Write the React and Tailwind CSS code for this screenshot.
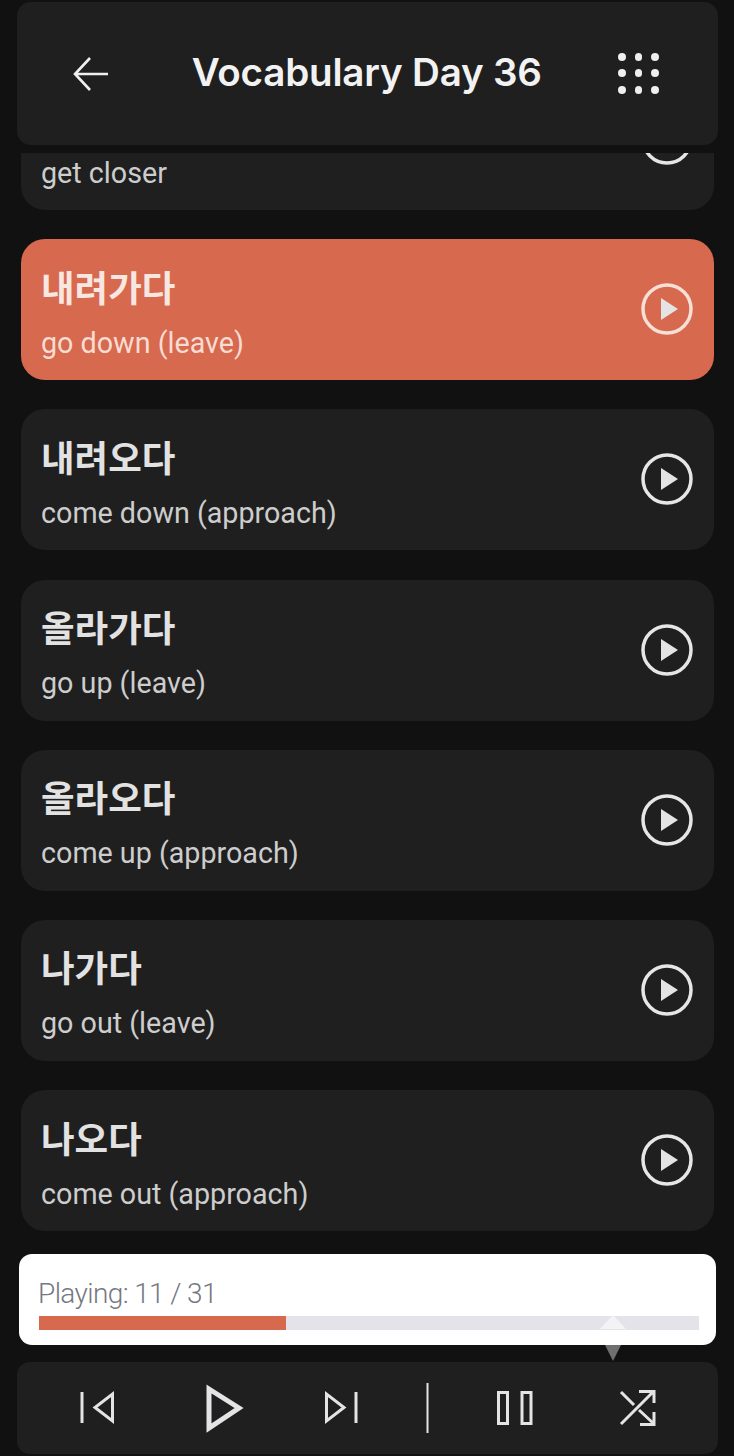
import React from "react";

const words = [
  { ko: "다가가다", en: "get closer" },
  { ko: "내려가다", en: "go down (leave)", active: true },
  { ko: "내려오다", en: "come down (approach)" },
  { ko: "올라가다", en: "go up (leave)" },
  { ko: "올라오다", en: "come up (approach)" },
  { ko: "나가다", en: "go out (leave)" },
  { ko: "나오다", en: "come out (approach)" },
];

const PlayCircle = ({ active }) => (
  <svg width="54" height="54" viewBox="0 0 54 54" fill="none" className="shrink-0 -mt-[1px]">
    <circle cx="27" cy="27" r="24" stroke={active ? "#f6dfd7" : "#e6e6e6"} strokeWidth="3.5" />
    <path d="M21 16 L38 27 L21 38 Z" fill="#e4e4e4" />
  </svg>
);

const WordCard = ({ ko, en, active }) => (
  <div
    className={`h-[141px] shrink-0 rounded-[24px] flex items-center justify-between pl-5 pr-5 ${
      active ? "bg-[#d6694e]" : "bg-[#1f1f1f]"
    }`}
  >
    <div className="flex flex-col pt-[6px]">
      <span
        className={`text-[36.5px] leading-[46px] font-bold font-['Noto_Sans_CJK_KR',sans-serif] ${
          active ? "text-[#f8e6e0]" : "text-[#e2e2e2]"
        }`}
      >
        {ko}
      </span>
      <span
        className={`mt-[14px] text-[28.7px] leading-[38px] font-['Roboto',sans-serif] ${
          active ? "text-[#f8dcd2]" : "text-[#cdcdcd]"
        }`}
      >
        {en}
      </span>
    </div>
    <PlayCircle active={active} />
  </div>
);

const App = () => {
  return (
    <div className="relative h-[1456px] w-[734px] overflow-hidden bg-[#111111]">
      {/* word list, scrolled under the header */}
      <div className="flex flex-col gap-[29.2px] pl-[21px] pr-[20px] pt-[69px]">
        {words.map((w) => (
          <WordCard key={w.ko} {...w} />
        ))}
      </div>

      {/* header */}
      <div className="absolute top-0 left-0 right-0 h-[153px] bg-[#111111] pt-[2px] pl-[17px] pr-[16px]">
        <div className="h-[143px] rounded-[14px] bg-[#1f1f1f] flex items-center justify-between pl-[56px] pr-[59px]">
          <svg width="35" height="34" viewBox="0 0 35 34" fill="none">
            <path d="M35 17 H2 M17 1 L2 17 L17 33" stroke="#efefef" strokeWidth="2.6" />
          </svg>
          <h1 className="ml-[7px] text-[38.6px] font-semibold text-[#f2f2f2] font-['Inter',sans-serif] tracking-[-0.2px] -mt-[1px]">
            Vocabulary Day 36
          </h1>
          <div className="grid grid-cols-3 gap-x-[9px] gap-y-[8.5px] -mt-[1px]">
            {Array.from({ length: 9 }).map((_, i) => (
              <span key={i} className="h-[8px] w-[7.5px] rounded-full bg-[#efefef]" />
            ))}
          </div>
        </div>
      </div>

      {/* player */}
      <div className="absolute left-0 right-0 bottom-0 h-[216px] bg-[#111111] pl-[17px] pr-[16px] pt-[14px]">
        <div className="relative mx-[2px] h-[91px] rounded-[13px] bg-white pl-[20px] pr-[17px] pt-[23px]">
          <div className="-ml-[1px] text-[28px] leading-[34px] tracking-[-0.6px] text-[#757883] font-['Roboto',sans-serif] font-light">
            Playing: 11 / 31
          </div>
          <div className="mt-[5px] h-[14px] bg-[#e3e3e9]">
            <div className="h-full w-[246.500px] bg-[#d6694e]" />
          </div>
          {/* small marker on the bar */}
          <svg width="26" height="15" viewBox="0 0 26 15" className="absolute right-[90px] top-[61px]">
            <path d="M13 0 L26 14 H0 Z" fill="#f3f3f5" />
          </svg>
          <svg width="16" height="16" viewBox="0 0 16 16" className="absolute right-[95px] top-[91px]">
            <path d="M0 0 H16 L8 16 Z" fill="#6f6f6f" />
          </svg>
        </div>
        <div className="mt-[17px] h-[92px] rounded-[13px] bg-[#1f1f1f] flex items-center">
          <svg width="701" height="92" viewBox="0 0 701 92" fill="none">
            <path d="M65 30 V61" stroke="#e4e4e6" strokeWidth="3" />
            <path d="M95.500 32 V59 L78 45.500 Z" stroke="#e4e4e6" strokeWidth="3" />
            <path d="M192 27 L222 46 L192 66 Z" stroke="#e4e4e6" strokeWidth="5" />
            <path d="M309.500 32 V59 L327 45.500 Z" stroke="#e4e4e6" strokeWidth="3" />
            <path d="M339 30 V61" stroke="#e4e4e6" strokeWidth="3" />
            <path d="M410.500 21 V71" stroke="#e4e4e6" strokeWidth="2" />
            <rect x="481.500" y="30.500" width="9" height="31" stroke="#e4e4e6" strokeWidth="3" />
            <rect x="505" y="30.500" width="9" height="31" stroke="#e4e4e6" strokeWidth="3" />
            <path d="M604 62 L636 30 M622 29.500 H637 V41 M604 30 L617 43 M622 48 L636 61 M637 50 V62.500 H623" stroke="#e4e4e6" strokeWidth="3" />
          </svg>
        </div>
      </div>
    </div>
  );
};

export default App;
